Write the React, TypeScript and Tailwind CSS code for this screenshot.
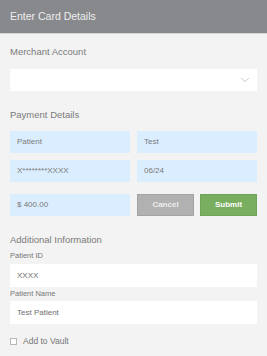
import { ChevronDown } from "lucide-react"

export default function App() {
  const fieldBlue = "h-[22px] bg-[#dbeeff] flex items-center px-[7px] text-[8px] text-[#7a7a7a]"
  const fieldWhite = "h-[23px] bg-white flex items-center px-[7px] text-[8px] text-[#6f6f6f]"
  const heading = "text-[9.5px] text-[#7a7a7a] leading-[14px]"

  return (
    <div className="w-[267px] h-[356px] bg-[#f3f3f3] font-['Liberation_Sans',Arial,sans-serif] overflow-hidden">
      <div className="h-[34px] bg-[#88898d] border-b border-[#d6d6d6] flex items-center px-[10px]">
        <span className="text-[10.5px] text-[#eeeeee]">Enter Card Details</span>
      </div>

      <div className="px-[10px]">
        <div className={`pt-[11px] ${heading}`}>Merchant Account</div>
        <div className="mt-[10px] h-[22px] bg-white flex items-center justify-end pr-[5px]">
          <ChevronDown className="h-[14px] w-[14px] text-[#b5b5b5]" strokeWidth={1.3} />
        </div>

        <div className={`mt-[17px] ${heading}`}>Payment Details</div>
        <div className="mt-[9px] grid grid-cols-2 gap-x-[7px] gap-y-[7px]">
          <div className={fieldBlue}>Patient</div>
          <div className={fieldBlue}>Test</div>
          <div className={fieldBlue}>X********XXXX</div>
          <div className={fieldBlue}>06/24</div>
          <div className={`${fieldBlue} mt-[5px]`}>$ 400.00</div>
          <div className="mt-[5px] flex gap-[6px]">
            <button className="flex-1 h-[22px] bg-[#b1b1b1] border border-[#a3a3a3] text-[8px] font-bold text-[#eeeeee]">Cancel</button>
            <button className="flex-1 h-[22px] bg-[#79ad5f] border border-[#6fa456] text-[8px] font-bold text-white">Submit</button>
          </div>
        </div>

        <div className={`mt-[17px] ${heading}`}>Additional Information</div>
        <div className="mt-[3px] text-[7.5px] text-[#777777] leading-[12px]">Patient ID</div>
        <div className={`mt-[2px] ${fieldWhite}`}>XXXX</div>
        <div className="mt-[1px] text-[7.5px] text-[#777777] leading-[12px]">Patient Name</div>
        <div className={`mt-[1px] ${fieldWhite}`}>Test Patient</div>

        <label className="mt-[11px] flex items-center gap-[6px] text-[8.5px] text-[#777777]">
          <span className="h-[7px] w-[7px] border border-[#b8b8b8] bg-white" />
          Add to Vault
        </label>
      </div>
    </div>
  )
}
